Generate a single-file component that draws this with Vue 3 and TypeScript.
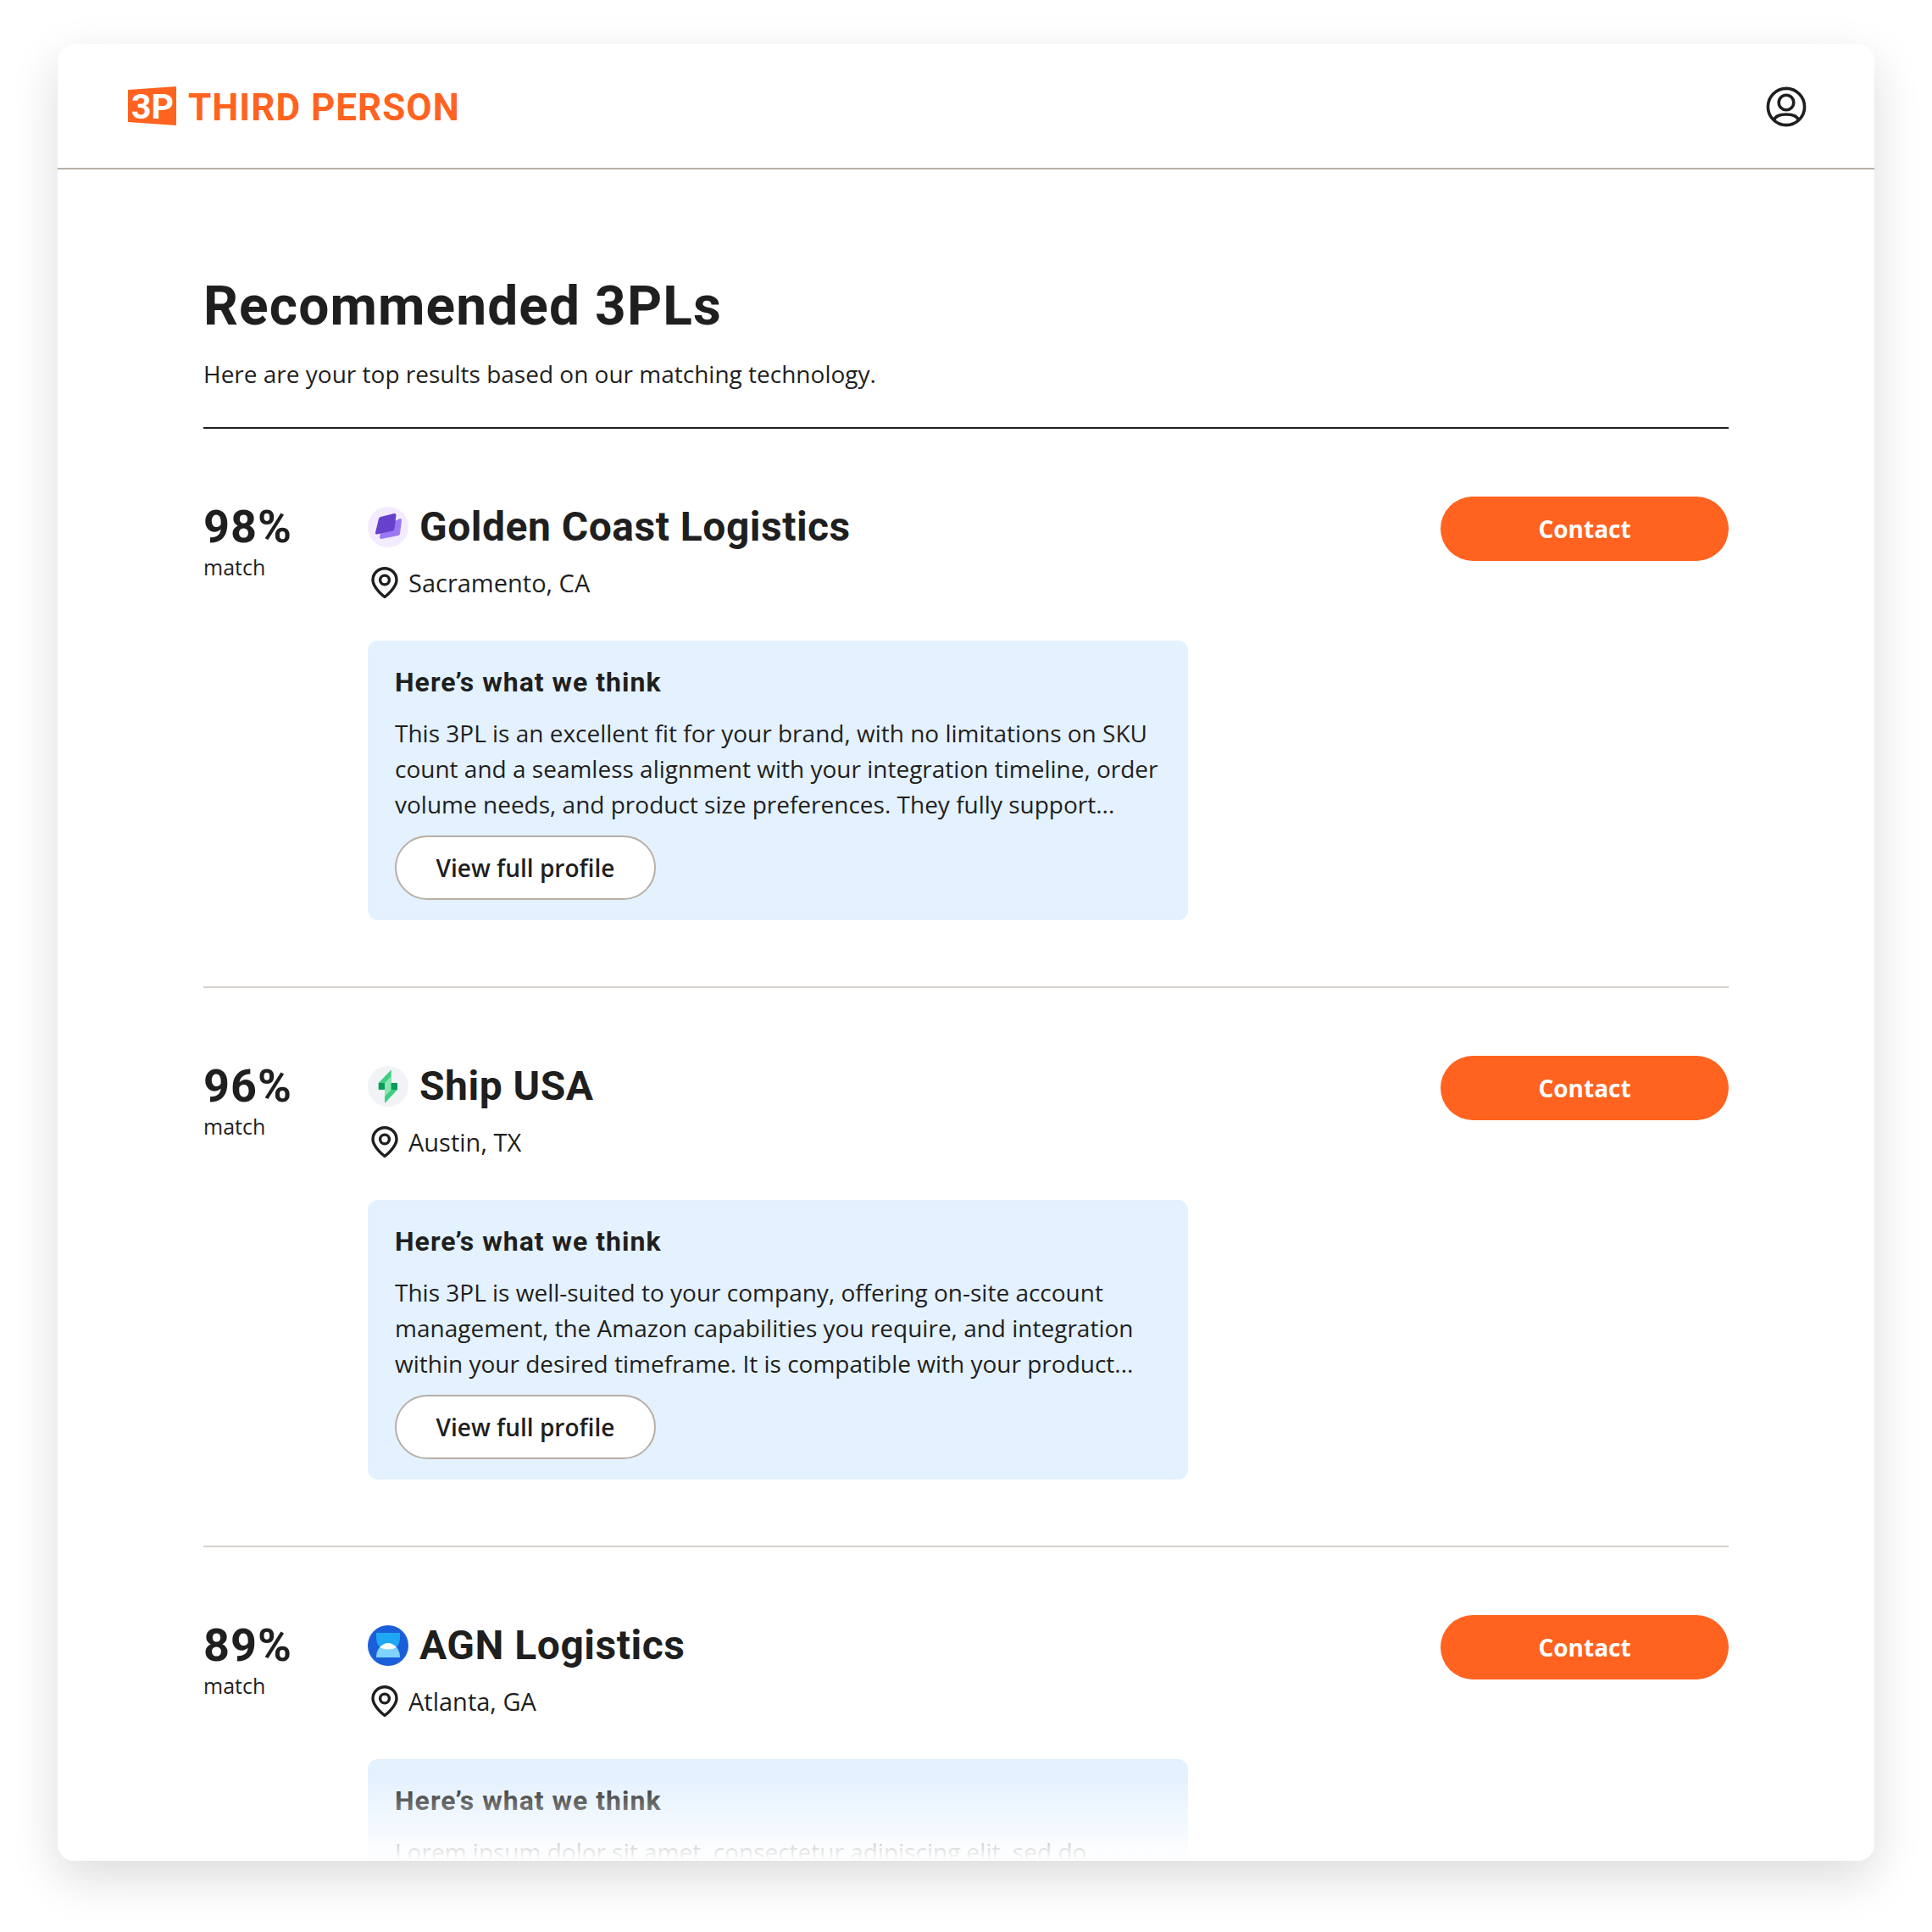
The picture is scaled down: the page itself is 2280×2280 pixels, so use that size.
<template>
  <div class="page">
    <div class="window">
      <header class="topbar">
        <div class="brand">
          <svg class="brand-mark" viewBox="0 0 57 46">
            <polygon points="0,4 57,0 57,46 0,42" fill="#ff631f" />
            <text x="29" y="38" text-anchor="middle" class="brand-mark-text">3P</text>
          </svg>
          <span class="brand-name">THIRD PERSON</span>
        </div>
        <svg class="user-icon" viewBox="0 0 48 48" fill="none" stroke="#1f1f1f" stroke-width="3.6">
          <circle cx="24" cy="24" r="21.6" />
          <circle cx="24" cy="19" r="8.8" />
          <path d="M9.5 40 C11 34.500 16 33 24 33 C32 33 37 34.500 38.500 40" />
        </svg>
      </header>

      <main class="content">
        <h1>Recommended 3PLs</h1>
        <p class="subtitle">Here are your top results based on our matching technology.</p>

        <section v-for="item in results" :key="item.name" class="result">
          <div class="score">
            <div class="percent">{{ item.match }}%</div>
            <div class="match">match</div>
          </div>

          <div class="details">
            <div class="name-row">
              <svg v-if="item.logo === 'purple'" class="logo" viewBox="0 0 48 48">
                <circle cx="24" cy="24" r="24" fill="#f3ebff" />
                <path d="M16 24 L38 14 Q40 14 40 16 L38 32 Q38 33 36 34 L16 38 Q14 38 14 36 Z" fill="#9b78f2" />
                <path d="M13 14 Q13.500 12.500 15 12 L31 8 Q33.500 7.500 33.500 10 L31.500 26 Q31 28 29 28.500 L11 32.500 Q8.500 33 9 30.500 Z" fill="#6740cc" />
              </svg>
              <svg v-else-if="item.logo === 'green'" class="logo" viewBox="0 0 48 48">
                <circle cx="24" cy="24" r="24" fill="#f1f3f7" />
                <polygon points="27.700,4.500 12.700,20 20,28 27.700,20" fill="#3ecf80" />
                <polygon points="20,44 35,28 27.700,20 20,28" fill="#3ecf80" />
                <polygon points="27.700,12 20,20 20,36 27.700,28" fill="#8ce7b5" />
                <rect x="12.700" y="20" width="7.300" height="8" fill="#0a9a5c" />
                <rect x="27.700" y="20" width="7.300" height="8" fill="#0a9a5c" />
              </svg>
              <svg v-else class="logo" viewBox="0 0 48 48">
                <circle cx="24" cy="24" r="24" fill="#1a5fd9" />
                <path d="M10 9 H38 V14 Q38 21 34 26 H14 Q10 21 10 14 Z" fill="#1ea8f3" />
                <path d="M14 26 H34 Q38 31 38 38 H10 Q10 31 14 26 Z" fill="#80d2ff" />
                <path d="M14 26 Q24 16 34 26 Q24 31 14 26 Z" fill="#fff" />
              </svg>
              <h2>{{ item.name }}</h2>
            </div>

            <div class="location">
              <svg class="pin" viewBox="0 0 32 38" fill="none" stroke="#1f1f1f" stroke-width="3.400">
                <path d="M16 35.500 C16 35.500 2 25 2 15.500 A14 13.800 0 0 1 30 15.500 C30 25 16 35.500 16 35.500 Z" stroke-linejoin="round" />
                <circle cx="16" cy="15.500" r="5.400" />
              </svg>
              <span>{{ item.city }}</span>
            </div>

            <div class="think">
              <h3>Here’s what we think</h3>
              <p>
                <span v-for="line in item.lines" :key="line" class="line">{{ line }}</span>
              </p>
              <button v-if="item.profile" class="profile-btn">View full profile</button>
            </div>
          </div>

          <button class="contact-btn">Contact</button>
        </section>
      </main>

      <div class="fade"></div>
    </div>
  </div>
</template>

<script setup lang="ts">
interface Result {
  match: number
  name: string
  city: string
  logo: 'purple' | 'green' | 'blue'
  lines: string[]
  profile: boolean
}

const results: Result[] = [
  {
    match: 98,
    name: 'Golden Coast Logistics',
    city: 'Sacramento, CA',
    logo: 'purple',
    lines: [
      'This 3PL is an excellent fit for your brand, with no limitations on SKU',
      'count and a seamless alignment with your integration timeline, order',
      'volume needs, and product size preferences. They fully support...'
    ],
    profile: true
  },
  {
    match: 96,
    name: 'Ship USA',
    city: 'Austin, TX',
    logo: 'green',
    lines: [
      'This 3PL is well-suited to your company, offering on-site account',
      'management, the Amazon capabilities you require, and integration',
      'within your desired timeframe. It is compatible with your product...'
    ],
    profile: true
  },
  {
    match: 89,
    name: 'AGN Logistics',
    city: 'Atlanta, GA',
    logo: 'blue',
    lines: ['Lorem ipsum dolor sit amet, consectetur adipiscing elit, sed do'],
    profile: false
  }
]
</script>

<style>
html,
body {
  background: #fff;
}
</style>

<style scoped>
.page {
  width: 2280px;
  height: 2280px;
  padding: 52px 68px 84px;
  box-sizing: border-box;
  font-family: 'Open Sans', sans-serif;
  color: #1f1f1f;
}

.window {
  position: relative;
  height: 100%;
  background: #fff;
  border-radius: 20px;
  overflow: hidden;
  box-shadow: 0 20px 56px rgba(0, 0, 0, 0.14);
}

.topbar {
  display: flex;
  align-items: center;
  justify-content: space-between;
  height: 148px;
  box-sizing: border-box;
  padding: 0 80px 0 83px;
  border-bottom: 2px solid #b8afa6;
}

.brand {
  display: flex;
  align-items: center;
  gap: 14px;
}

.brand-mark {
  width: 57px;
  height: 46px;
  overflow: visible;
}

.brand-mark-text {
  font-family: Roboto, sans-serif;
  font-size: 41px;
  font-weight: 700;
  fill: #fff;
}

.brand-name {
  padding-top: 3px;
  font-family: Roboto, sans-serif;
  font-size: 44px;
  font-weight: 700;
  letter-spacing: 1px;
  color: #ff631f;
  line-height: 1;
}

.user-icon {
  width: 48px;
  height: 48px;
  margin-top: 2px;
}

.content {
  padding: 124px 172px 0;
}

h1 {
  margin: 0;
  font-family: Roboto, sans-serif;
  font-size: 64px;
  font-weight: 700;
  letter-spacing: 1.1px;
  line-height: 76px;
}

.subtitle {
  margin: 21px 0 0;
  padding-bottom: 43px;
  font-size: 28px;
  line-height: 40px;
  border-bottom: 2px solid #1f1f1f;
}

.result {
  display: flex;
  align-items: flex-start;
  padding: 80px 0 78px;
  border-bottom: 2px solid #d6d2cd;
}

.score {
  width: 194px;
  flex: none;
}

.percent {
  margin-top: 4px;
  font-family: Roboto, sans-serif;
  font-size: 54px;
  font-weight: 700;
  letter-spacing: 1px;
  line-height: 64px;
}

.match {
  font-size: 25px;
  line-height: 30px;
  font-weight: 500;
}

.details {
  flex: 1;
}

.name-row {
  display: flex;
  align-items: center;
  gap: 13px;
  height: 72px;
}

.logo {
  width: 48px;
  height: 48px;
  flex: none;
}

h2 {
  margin: 0;
  font-family: Roboto, sans-serif;
  font-size: 48px;
  font-weight: 700;
  letter-spacing: 0.5px;
  line-height: 72px;
}

.location {
  display: flex;
  align-items: center;
  gap: 12px;
  margin: 10px 0 0 4px;
  font-size: 29px;
  line-height: 40px;
}

.pin {
  width: 32px;
  height: 38px;
  flex: none;
}

.think {
  width: 968px;
  box-sizing: border-box;
  margin-top: 48px;
  padding: 28px 32px 24px;
  background: #e4f1fe;
  border-radius: 12px;
}

h3 {
  margin: 0;
  font-family: Roboto, sans-serif;
  font-size: 32px;
  font-weight: 700;
  letter-spacing: 1px;
  line-height: 42px;
}

.think p {
  margin: 18px 0 0;
  font-size: 28px;
  line-height: 42px;
}

.line {
  display: block;
  white-space: nowrap;
}

.profile-btn {
  display: block;
  width: 308px;
  height: 76px;
  margin-top: 16px;
  background: #fff;
  border: 2px solid #b8afa6;
  border-radius: 38px;
  font-family: 'Open Sans', sans-serif;
  font-size: 28px;
  font-weight: 600;
  color: #1f1f1f;
}

.contact-btn {
  flex: none;
  width: 340px;
  height: 76px;
  margin-top: 0;
  background: #ff631f;
  border: none;
  border-radius: 38px;
  font-family: 'Open Sans', sans-serif;
  font-size: 28px;
  font-weight: 700;
  color: #fff;
}

.fade {
  position: absolute;
  left: 0;
  right: 0;
  bottom: 0;
  height: 100px;
  background: linear-gradient(rgba(255, 255, 255, 0), #fff);
  pointer-events: none;
}
</style>
